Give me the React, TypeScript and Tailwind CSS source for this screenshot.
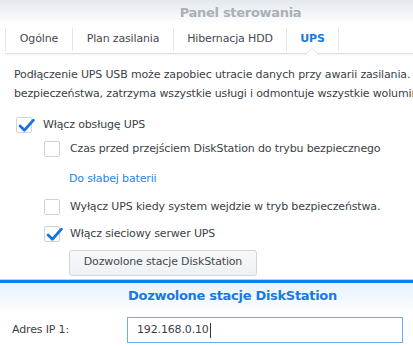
import { Fragment } from "react"

function Check({ checked }: { checked?: boolean }) {
  return (
    <span className="relative block h-[16px] w-[16px] shrink-0 rounded-[2px] border border-[#cdd3da] bg-white">
      {checked && (
        <svg viewBox="0 0 16 16" className="absolute left-[1px] top-[-1px] h-[17px] w-[17px]">
          <path d="M2 8.5 L6 12.5 L14.5 3" fill="none" stroke="#1173e6" strokeWidth="2.6" strokeLinecap="round" strokeLinejoin="round" />
        </svg>
      )}
    </span>
  )
}

export default function App() {
  const tabs = [
    { label: "Ogólne", w: "w-[66px]" },
    { label: "Plan zasilania", w: "w-[100px]" },
    { label: "Hibernacja HDD", w: "w-[112px]" },
    { label: "UPS", w: "w-[51px]", active: true },
  ]

  return (
    <div className="relative h-[346px] w-[413px] overflow-hidden bg-white font-['DejaVu_Sans',sans-serif] text-[11px] tracking-[-0.15px] text-[#3a3f47]">
      <div className="flex h-[25px] items-center justify-center bg-gradient-to-b from-[#e4e8ed] to-white pl-[68px]">
        <span className="pt-[1px] text-[13px] font-bold tracking-[-0.3px] text-[#a9b0b8]">Panel sterowania</span>
      </div>

      <div className="relative flex h-[29px] items-center pl-[5px]">
        <span className="h-[23px] w-px bg-[#e3e7ec]" />
        {tabs.map((t) => (
          <Fragment key={t.label}>
            <span className={`${t.w} text-center ${t.active ? "font-bold text-[#1a78e0]" : "text-[#45494f]"}`}>{t.label}</span>
            <span className="h-[23px] w-px bg-[#e3e7ec]" />
          </Fragment>
        ))}
        <div className="absolute bottom-0 left-[5px] right-0 h-px bg-[#dde1e6] shadow-[0_1px_1px_rgba(0,0,0,0.05)]" />
        <svg className="absolute bottom-[-1px] left-[305px] h-[7px] w-[14px]" viewBox="0 0 14 7">
          <path d="M0 7 L7 0.5 L14 7 Z" fill="white" />
          <path d="M0 6.5 L7 0.5 L14 6.5" fill="none" stroke="#dde1e6" strokeWidth="1" />
        </svg>
      </div>

      <div className="whitespace-nowrap pl-[14px] pt-[11px] leading-[19px]">
        <p>Podłączenie UPS USB może zapobiec utracie danych przy awarii zasilania.</p>
        <p>bezpieczeństwa, zatrzyma wszystkie usługi i odmontuje wszystkie woluminy</p>
      </div>

      <div className="whitespace-nowrap">
        <label className="mt-[14px] flex items-center gap-[11px] pl-[16px]">
          <Check checked />
          <span>Włącz obsługę UPS</span>
        </label>
        <label className="mt-[7px] flex items-center gap-[10px] pl-[44px]">
          <Check />
          <span>Czas przed przejściem DiskStation do trybu bezpiecznego</span>
        </label>
        <div className="mt-[14px] pl-[69px] text-[#2a86e4]">Do słabej baterii</div>
        <label className="mt-[11px] flex items-center gap-[10px] pl-[44px]">
          <Check />
          <span>Wyłącz UPS kiedy system wejdzie w tryb bezpieczeństwa.</span>
        </label>
        <label className="mt-[11px] flex items-center gap-[10px] pl-[44px]">
          <Check checked />
          <span>Włącz sieciowy serwer UPS</span>
        </label>
        <div className="mt-[7px] pl-[69px]">
          <button className="h-[26px] w-[188px] rounded-[3px] border border-[#cfd6de] bg-gradient-to-b from-[#f7f9fb] to-[#eef1f4] text-[#45494f]">
            Dozwolone stacje DiskStation
          </button>
        </div>
      </div>

      <div className="absolute left-0 right-0 top-[279px] h-[67px] border-t border-[#c9ced4]">
        <div className="h-[3px] bg-[#0f7ee6]" />
        <div className="h-[63px] bg-gradient-to-b from-[#e8f2fc] via-white to-white">
          <div className="flex h-[26px] items-center justify-center pl-[52px] text-[13px] font-bold tracking-[-0.3px] text-[#1a78e0]">
            Dozwolone stacje DiskStation
          </div>
          <div className="mt-[8px] flex items-center">
            <span className="w-[127px] pl-[12px]">Adres IP 1:</span>
            <div className="flex h-[26px] w-[276px] items-center border border-[#6aaef0] bg-white pl-[9px]">
              <span>192.168.0.10</span>
              <span className="ml-[1px] h-[15px] w-px bg-[#333]" />
            </div>
          </div>
        </div>
      </div>
    </div>
  )
}
